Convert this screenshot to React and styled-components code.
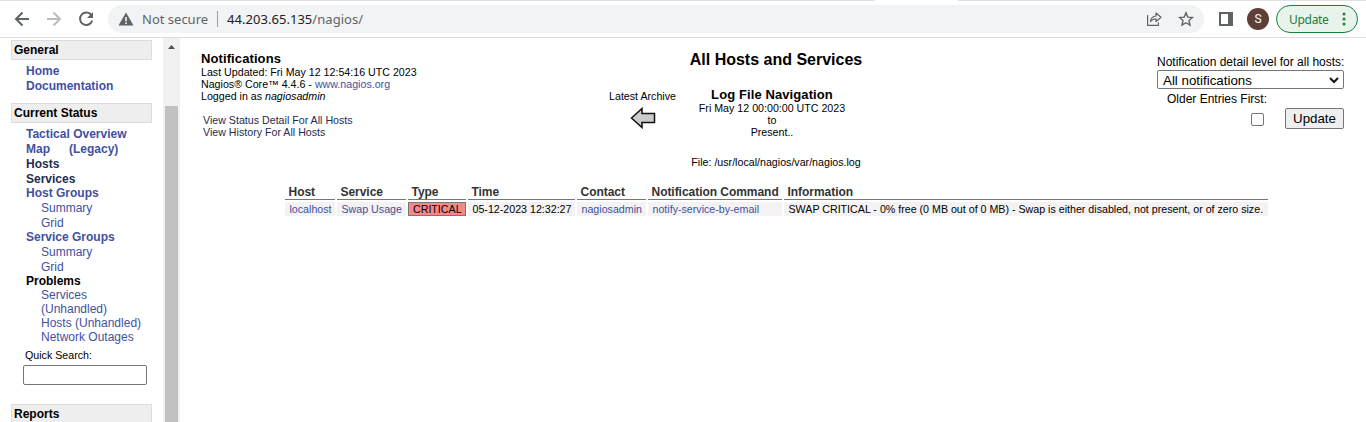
import React from "react";
import styled, { createGlobalStyle } from "styled-components";

const GlobalStyle = createGlobalStyle`
  * { box-sizing: border-box; }
  body { margin: 0; background: #fff; overflow: hidden; font-family: "Liberation Sans", Arial, sans-serif; color: #000; }
`;

const Page = styled.div`
  display: flex;
  flex-direction: column;
  height: 422px;
  overflow: hidden;
`;

const Toolbar = styled.header`
  height: 38px;
  flex: none;
  display: flex;
  align-items: center;
  background: #fff;
  border-top: 1px solid #dee1e6;
  border-bottom: 1px solid #dadce0;
  padding: 0 8px 0 14px;
  font-family: "Noto Sans", "Open Sans", sans-serif;
`;

const TabEdge = styled.i`
  position: absolute;
  left: 875px;
  top: 0;
  width: 83px;
  height: 1px;
  background: #fff;
`;

const NavButtons = styled.div`
  display: flex;
  gap: 16px;
  width: 94px;
  svg { display: block; }
`;

const AddressBar = styled.div`
  flex: 1;
  height: 28px;
  border-radius: 14px;
  background: #f1f3f4;
  display: flex;
  align-items: center;
  padding: 0 10px;
`;

const Security = styled.span`
  font-size: 13px;
  color: #5f6368;
  margin-left: 8px;
  width: 75px;
  white-space: nowrap;
`;

const Url = styled.span`
  border-left: 1px solid #9aa0a6;
  height: 16px;
  line-height: 16px;
  padding-left: 9px;
  font-size: 13px;
  color: #5f6368;
  flex: 1;
  letter-spacing: 0.04px;
  b { font-weight: 400; color: #202124; }
`;

const AddressIcons = styled.div`
  display: flex;
  align-items: center;
  gap: 16px;
`;

const PanelIcon = styled.svg`
  margin-left: 15px;
`;

const Avatar = styled.span`
  width: 22px;
  height: 22px;
  border-radius: 50%;
  background: #5d4037;
  color: #fff;
  font: 12px/22px Roboto, sans-serif;
  text-align: center;
  margin: 0 7px 0 14px;
`;

const UpdatePill = styled.span`
  width: 82px;
  height: 28px;
  border: 1px solid #188038;
  border-radius: 14px;
  background: #e8f3ec;
  color: #188038;
  display: flex;
  align-items: center;
  justify-content: space-between;
  padding: 0 11px 0 12px;
  font-size: 12px;
  letter-spacing: -0.3px;
`;

const Body = styled.div`
  flex: 1;
  min-height: 0;
  display: flex;
`;

const Sidebar = styled.nav`
  width: 163px;
  flex: none;
  padding: 2px 11px 0;
  overflow: hidden;
`;

const SectionTitle = styled.h2`
  height: 20px;
  margin: ${(p) => p.$top || 0}px 0 4px;
  border: 1px solid #dcdcdc;
  background: #eee;
  padding-left: 2px;
  font: bold 12px/18px "Liberation Sans", sans-serif;
`;

const NavItem = styled.div`
  height: ${(p) => p.$h || 15}px;
  line-height: ${(p) => p.$h || 15}px;
  margin-top: ${(p) => (p.$tight ? -1 : 0)}px;
  margin-bottom: ${(p) => p.$after || 0}px;
  padding-left: ${(p) => (p.$sub ? 30 : 15)}px;
  font-size: 12px;
  font-weight: ${(p) => (p.$sub ? 400 : 700)};
  color: ${(p) => p.$color || "#3f51a0"};
  white-space: pre;
`;

const LegacyLink = styled.span`
  margin-left: 19px;
`;

const SearchLabel = styled.label`
  display: block;
  margin: 4px 0 3px 14px;
  font-size: 10.67px;
  line-height: 14px;
`;

const SearchInput = styled.input`
  display: block;
  width: 124px;
  height: 20px;
  margin: 0 0 0 12px;
  border: 1px solid #767676;
  border-radius: 2px;
  padding: 0;
`;

const ScrollTrack = styled.div`
  width: 17px;
  flex: none;
  background: #f1f1f1;
  padding: 0 2px;
  display: flex;
  flex-direction: column;
`;

const ScrollArrow = styled.div`
  height: 68px;
  padding: 7px 0 0 3px;
  svg { display: block; }
`;

const ScrollThumb = styled.div`
  flex: 1;
  background: #c1c1c1;
`;

const Main = styled.main`
  flex: 1;
  padding: 0 22px 0 21px;
  min-width: 0;
`;

const Head = styled.div`
  display: flex;
  height: 147px;
`;

const Column = styled.div`
  width: ${(p) => p.$w}px;
  flex: none;
  padding-top: ${(p) => p.$top || 0}px;
  text-align: ${(p) => p.$align || "left"};
`;

const Line = styled.div`
  font-size: ${(p) => p.$size || 10.67}px;
  font-weight: ${(p) => (p.$bold ? 700 : 400)};
  line-height: ${(p) => p.$h || 12}px;
  margin-top: ${(p) => p.$top || 0}px;
  padding-left: ${(p) => p.$left || 0}px;
  letter-spacing: ${(p) => p.$ls || 0}px;
  color: ${(p) => p.$color || "#000"};
  white-space: nowrap;
`;

const Link = styled.a`
  color: #3f51a0;
`;

const ArchiveNav = styled.div`
  display: flex;
  margin-top: 18px;
`;

const ArchiveArrow = styled.svg`
  display: block;
  margin: 5px 0 0 26px;
`;

const Select = styled.div`
  width: 187px;
  height: 19px;
  margin-top: 2px;
  border: 1px solid #767676;
  border-radius: 2px;
  display: flex;
  align-items: center;
  justify-content: space-between;
  padding: 1px 4px 0 5px;
  font-size: 13.33px;
`;

const Controls = styled.div`
  display: flex;
  margin-top: 3px;
  align-items: center;
`;

const Checkbox = styled.span`
  width: 13px;
  height: 13px;
  border: 1px solid #767676;
  border-radius: 2px;
  margin: 1px 21px 0 94px;
`;

const Button = styled.button`
  width: 59px;
  height: 21px;
  padding: 0;
  border: 1px solid #767676;
  border-radius: 2px;
  background: #efefef;
  font: 13.33px/18px "Liberation Sans", sans-serif;
  color: #000;
`;

const LogTable = styled.div`
  display: grid;
  grid-template-columns: 50px 69px 58px 107px 69px 134px 484px;
  column-gap: 2px;
  row-gap: 2px;
  margin-left: 84px;
`;

const HeadCell = styled.div`
  height: 15px;
  border-bottom: 1px solid #777;
  padding-left: 3.5px;
  font: bold 12px/14px "Liberation Sans", sans-serif;
  color: #333;
  letter-spacing: -0.04px;
  white-space: nowrap;
`;

const Cell = styled.div`
  height: 14px;
  background: ${(p) => (p.$critical ? "#f88888" : "#f4f2f2")};
  border: ${(p) => (p.$critical ? "1px solid #777" : "0")};
  padding-left: ${(p) => (p.$critical ? 4 : 4.5)}px;
  font-size: 10.67px;
  line-height: ${(p) => (p.$critical ? 12 : 14)}px;
  color: ${(p) => (p.$link ? "#3f51a0" : "#000")};
  white-space: nowrap;
`;

const navItems = [
  { t: "Tactical Overview" },
  { t: "Map", extra: "(Legacy)" },
  { t: "Hosts", $color: "#1f2d50" },
  { t: "Services", $color: "#1f2d50" },
  { t: "Host Groups", $h: 14, $tight: true, $after: 1 },
  { t: "Summary", $sub: true },
  { t: "Grid", $sub: true },
  { t: "Service Groups", $h: 14, $tight: true, $after: 1 },
  { t: "Summary", $sub: true },
  { t: "Grid", $sub: true },
  { t: "Problems", $h: 14, $color: "#000", $tight: true },
  { t: "Services", $sub: true, $h: 14 },
  { t: "(Unhandled)", $sub: true, $h: 14 },
  { t: "Hosts (Unhandled)", $sub: true, $h: 14 },
  { t: "Network Outages", $sub: true, $h: 14 },
];

const columns = [
  { head: "Host", value: "localhost", $link: true },
  { head: "Service", value: "Swap Usage", $link: true },
  { head: "Type", value: "CRITICAL", $critical: true },
  { head: "Time", value: "05-12-2023 12:32:27" },
  { head: "Contact", value: "nagiosadmin", $link: true },
  { head: "Notification Command", value: "notify-service-by-email", $link: true },
  { head: "Information", value: "SWAP CRITICAL - 0% free (0 MB out of 0 MB) - Swap is either disabled, not present, or of zero size." },
];

const Browser = () => (
  <Toolbar>
    <TabEdge />
    <NavButtons>
      <svg width="16" height="16" viewBox="0 0 16 16" fill="none" stroke="#5f6368" strokeWidth="2"><path d="M15 8H2.500M8.500 1.500L2 8l6.500 6.500" /></svg>
      <svg width="16" height="16" viewBox="0 0 16 16" fill="none" stroke="#babcbe" strokeWidth="2"><path d="M1 8h12.500M7.500 1.500L14 8l-6.500 6.500" /></svg>
      <svg width="16" height="16" viewBox="0 0 16 16"><path d="M13.300 4.200A6.200 6.200 0 1 0 14.200 9.500" fill="none" stroke="#5f6368" strokeWidth="2" /><path d="M15 1v6H9z" fill="#5f6368" /></svg>
    </NavButtons>
    <AddressBar>
      <svg width="16" height="14" viewBox="0 0 16 14"><path d="M8 .5L15.500 13.500H.5z" fill="#5f6368" /><path d="M8 5v4.200M8 10.200v1.800" stroke="#f1f3f4" strokeWidth="1.600" /></svg>
      <Security>Not secure</Security>
      <Url><b>44.203.65.135</b>/nagios/</Url>
      <AddressIcons>
        <svg width="16" height="16" viewBox="0 0 16 16" fill="none" stroke="#5f6368" strokeWidth="1.200"><path d="M1.600 4v10.400h10.800V11.500" /><path d="M4.500 10.500C5 7 7 5.300 10 5V2l5 4.300-5 4.200V7.800C7.500 7.800 6 8.600 4.500 10.500z" strokeLinejoin="round" /></svg>
        <svg width="16" height="16" viewBox="0 0 16 16" fill="none" stroke="#5f6368" strokeWidth="1.400"><path d="M8 1.900l1.800 4.200 4.700.4-3.500 3.100 1 4.500L8 11.700l-4 2.400 1-4.500L1.500 6.500l4.700-.4z" /></svg>
      </AddressIcons>
    </AddressBar>
    <PanelIcon width="14" height="14" viewBox="0 0 14 14"><path fillRule="evenodd" d="M0 0h14v14H0zM2 2v10h7V2z" fill="#5f6368" /></PanelIcon>
    <Avatar>S</Avatar>
    <UpdatePill>
      Update
      <svg width="4" height="14" viewBox="0 0 4 14" fill="#188038"><circle cx="2" cy="2" r="1.500" /><circle cx="2" cy="7" r="1.500" /><circle cx="2" cy="12" r="1.500" /></svg>
    </UpdatePill>
  </Toolbar>
);

export default function App() {
  return (
    <Page>
      <GlobalStyle />
      <Browser />
      <Body>
        <Sidebar>
          <SectionTitle>General</SectionTitle>
          <NavItem>Home</NavItem>
          <NavItem>Documentation</NavItem>
          <SectionTitle $top={9}>Current Status</SectionTitle>
          {navItems.map(({ t, extra, ...style }, i) => (
            <NavItem key={i} {...style}>{t}{extra && <LegacyLink>{extra}</LegacyLink>}</NavItem>
          ))}
          <SearchLabel>Quick Search:</SearchLabel>
          <SearchInput />
          <SectionTitle $top={19}>Reports</SectionTitle>
        </Sidebar>
        <ScrollTrack>
          <ScrollArrow><svg width="7" height="4" viewBox="0 0 7 4"><path d="M0 4L3.500 0 7 4z" fill="#505050" /></svg></ScrollArrow>
          <ScrollThumb />
        </ScrollTrack>
        <Main>
          <Head>
            <Column $w={403} $top={13}>
              <Line $size={13} $bold $h={15} $ls={0.1}>Notifications</Line>
              <Line>Last Updated: Fri May 12 12:54:16 UTC 2023</Line>
              <Line>Nagios® Core™ 4.4.6 - <Link>www.nagios.org</Link></Line>
              <Line>Logged in as <i>nagiosadmin</i></Line>
              <Line $top={12} $left={2} $color="#1f2d50">View Status Detail For All Hosts</Line>
              <Line $left={2} $color="#1f2d50">View History For All Hosts</Line>
            </Column>
            <Column $w={344} $top={13} $align="center">
              <Line $size={16} $bold $h={18}>All Hosts and Services</Line>
              <ArchiveNav>
                <Column $w={77} $top={3} $align="center">
                  <Line>Latest Archive</Line>
                  <ArchiveArrow width="26" height="22" viewBox="0 0 26 22"><path d="M1.500 11L12 1.500V6.500H24.500V15.500H12V20.500z" fill="#ccc" stroke="#111" strokeWidth="1.500" /></ArchiveArrow>
                </Column>
                <Column $w={182} $align="center">
                  <Line $size={13} $bold $h={15} $ls={0.1}>Log File Navigation</Line>
                  <Line>Fri May 12 00:00:00 UTC 2023</Line>
                  <Line>to</Line>
                  <Line>Present..</Line>
                </Column>
              </ArchiveNav>
              <Line $top={18}>File: /usr/local/nagios/var/nagios.log</Line>
            </Column>
            <Column $w={209} />
            <Column $w={187} $top={18}>
              <Line $size={12}>Notification detail level for all hosts:</Line>
              <Select>
                All notifications
                <svg width="10" height="7" viewBox="0 0 10 7" fill="none" stroke="#111" strokeWidth="2"><path d="M1 1l4 4 4-4" /></svg>
              </Select>
              <Line $size={12} $top={4} $left={10}>Older Entries First:</Line>
              <Controls><Checkbox /><Button>Update</Button></Controls>
            </Column>
          </Head>
          <LogTable>
            {columns.map((c) => <HeadCell key={c.head}>{c.head}</HeadCell>)}
            {columns.map(({ head, value, ...style }) => <Cell key={head} {...style}>{value}</Cell>)}
          </LogTable>
        </Main>
      </Body>
    </Page>
  );
}
